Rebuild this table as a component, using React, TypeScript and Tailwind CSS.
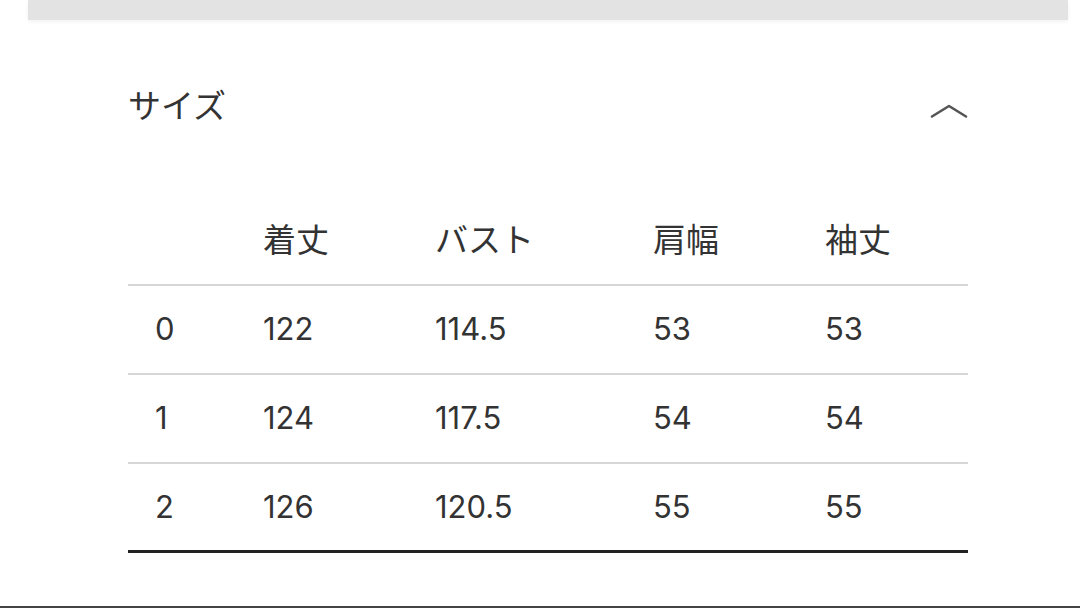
import React from 'react';

const headers = ['', '着丈', 'バスト', '肩幅', '袖丈'];

const rows = [
  ['0', '122', '114.5', '53', '53'],
  ['1', '124', '117.5', '54', '54'],
  ['2', '126', '120.5', '55', '55'],
];

const cols = 'grid grid-cols-[135px_172px_218px_172px_143px]';

const SizeTable = () => {
  return (
    <div className="w-[840px]">
      <div className={`${cols} h-[100px] items-center border-b-2 border-[#d6d6d6] pt-[8px] text-[33px] text-[#333] [font-family:'Noto_Sans_CJK_JP',sans-serif]`}>
        {headers.map((h, i) => (
          <div key={i} className={i === 0 ? 'pl-[27px]' : ''}>
            {h}
          </div>
        ))}
      </div>
      {rows.map((row, r) => (
        <div
          key={row[0]}
          className={`${cols} h-[89px] items-center text-[31px] text-[#333] [font-family:Inter,sans-serif] ${
            r === rows.length - 1 ? 'border-b-[3px] border-[#222]' : 'border-b-2 border-[#d6d6d6]'
          }`}
        >
          {row.map((cell, i) => (
            <div key={i} className={i === 0 ? 'pl-[27px]' : ''}>
              {cell}
            </div>
          ))}
        </div>
      ))}
    </div>
  );
};

const App = () => {
  return (
    <div className="flex h-[608px] w-[1080px] flex-col overflow-hidden bg-white">
      <div className="ml-[28px] mr-[12px] h-[20px] shrink-0 bg-[#e3e3e3] shadow-[0_2px_4px_rgba(0,0,0,0.05)]" />
      <div className="flex flex-1 flex-col pl-[128px] pr-[112px]">
        <div className="mt-[62px] flex items-start justify-between">
          <span className="text-[33px] leading-[44px] text-[#333] [font-family:'Noto_Sans_CJK_JP',sans-serif]">
            サイズ
          </span>
          <svg width="38" height="16" viewBox="0 0 38 16" className="mt-[21px]" fill="none">
            <path d="M2 13.5 L19 3 L36 13.5" stroke="#555" strokeWidth="2.6" strokeLinecap="round" strokeLinejoin="round" />
          </svg>
        </div>
        <div className="mt-[60px]">
          <SizeTable />
        </div>
      </div>
      <div className="h-[2px] shrink-0 bg-[#444]" />
    </div>
  );
};

export default App;
